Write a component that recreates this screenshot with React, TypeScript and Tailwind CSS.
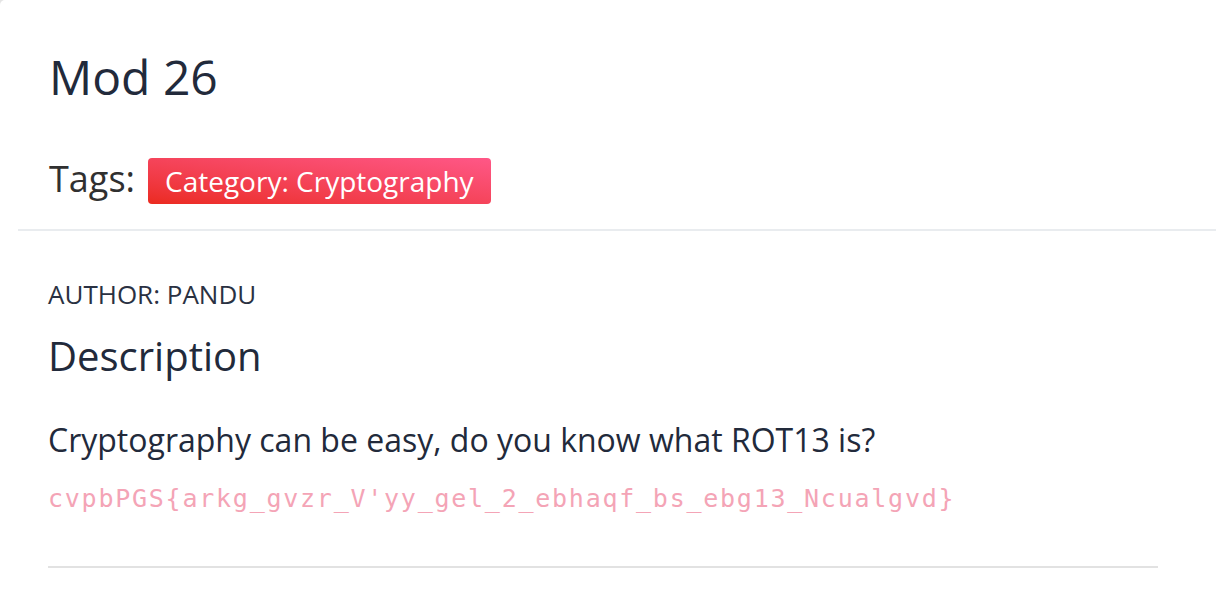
import React from "react";

export default function App() {
  return (
    <div className="min-h-screen bg-[#e4e4e4] font-['Open_Sans',sans-serif]">
      <div className="min-h-[606px] rounded-tl-[5px] bg-white">
        <div className="ml-[18px] border-b-2 border-[#e9ecef] pb-[25px] pl-[31px] pt-[48px]">
          <h1 className="text-[48px] leading-[58px] font-normal text-[#222a3b]">Mod 26</h1>
          <div className="mt-[50px] flex items-baseline gap-[13px]">
            <span className="text-[36px] leading-[46px] font-normal text-[#303030]">Tags:</span>
            <span className="inline-block h-[46px] rounded-[4px] bg-linear-to-tr from-[#eb2a1e] to-[#ff5787] px-[17px] text-[28px] leading-[46px] text-white">
              Category: Cryptography
            </span>
          </div>
        </div>
        <div className="pl-[48px] pr-[58px] pt-[48px]">
          <div className="text-[26px] leading-[31px] text-[#2a3142]">AUTHOR: PANDU</div>
          <h2 className="mt-[22px] text-[40px] leading-[48px] font-normal text-[#222a3b]">Description</h2>
          <p className="mt-[36px] text-[32px] leading-[48px] text-[#222a3b]">
            Cryptography can be easy, do you know what ROT13 is?
          </p>
          <p className="mt-[17px] font-['DejaVu_Sans_Mono',monospace] text-[25px] leading-[36px] tracking-[1.75px] text-[#f4a4b6]">
            cvpbPGS{"{"}arkg_gvzr_V'yy_gel_2_ebhaqf_bs_ebg13_Ncualgvd{"}"}
          </p>
          <div className="mt-[49px] h-[2px] bg-[#e2e2e2]" />
        </div>
      </div>
    </div>
  );
}
